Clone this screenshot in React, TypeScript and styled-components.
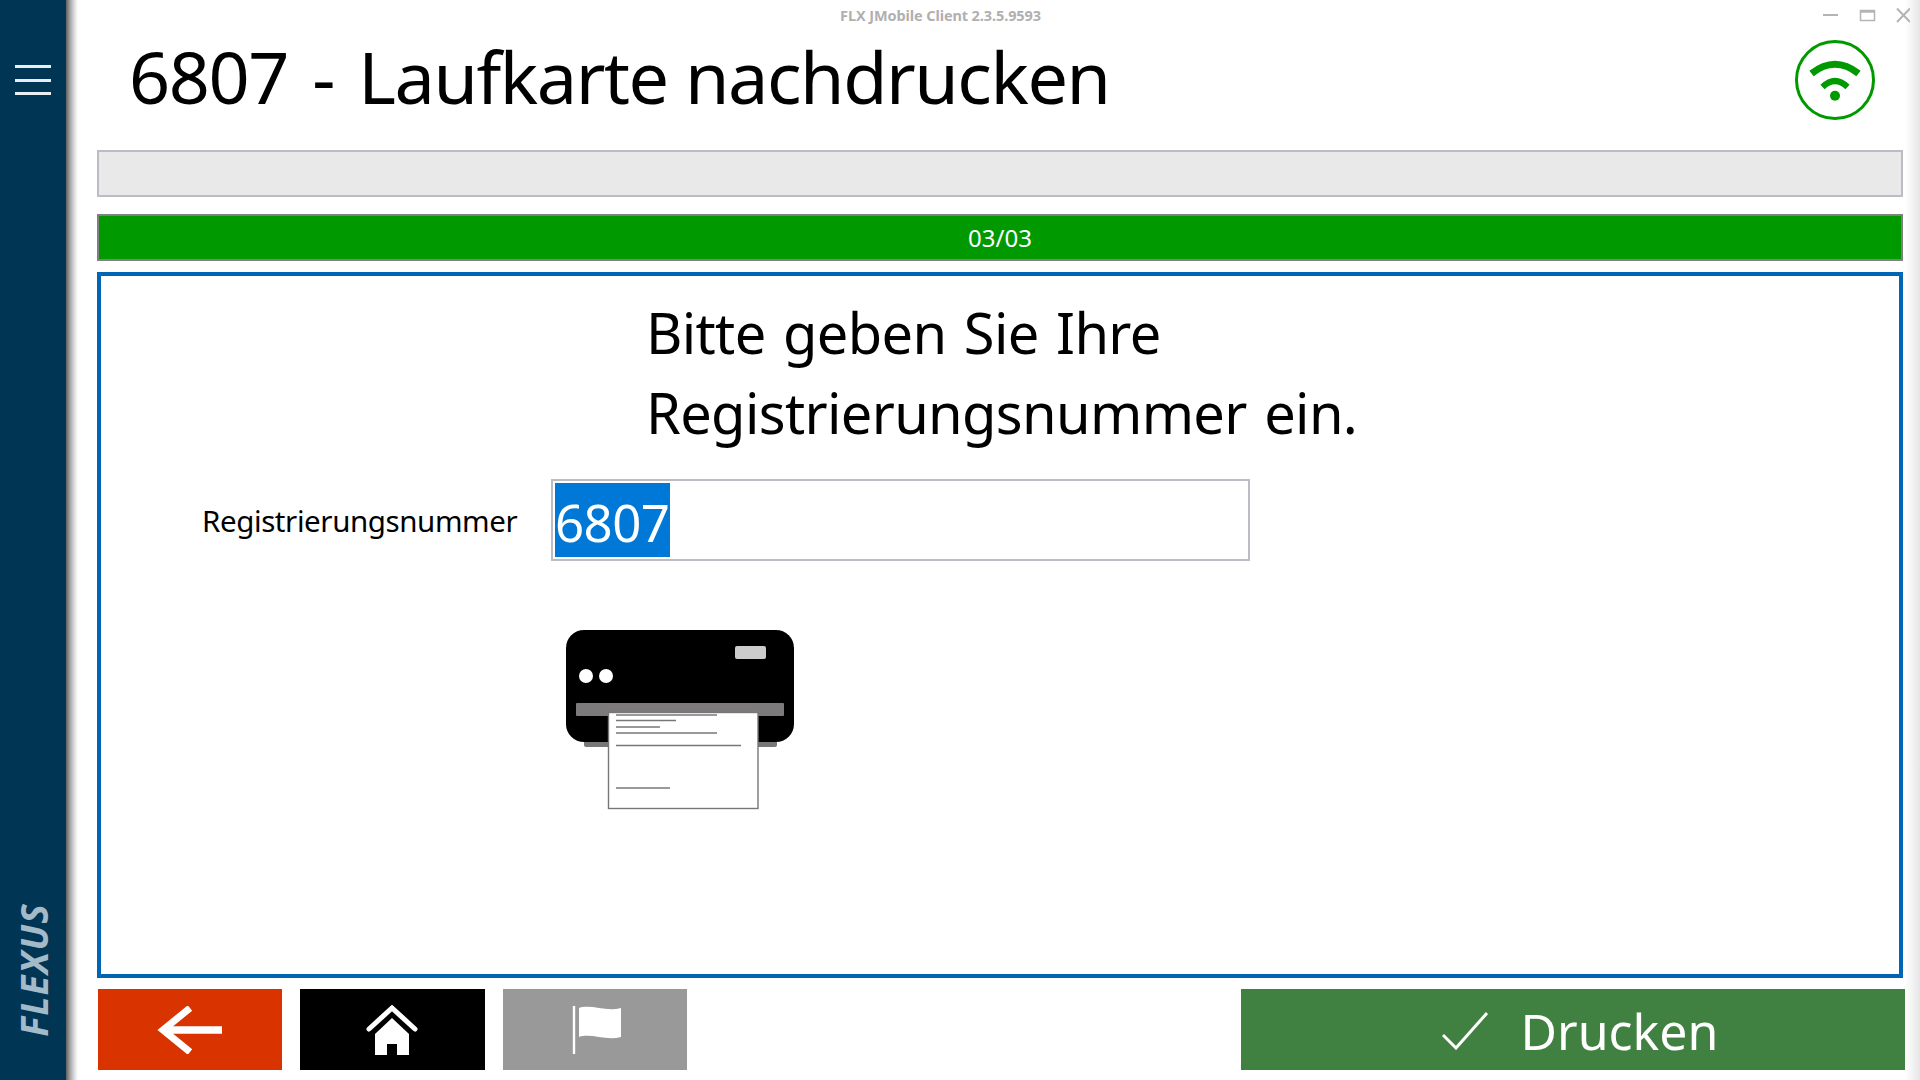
import React from "react";
import styled, { createGlobalStyle } from "styled-components";

const Global = createGlobalStyle`
  html, body { margin: 0; padding: 0; background: #fff; }
  body { font-family: "Noto Sans", "Open Sans", sans-serif; overflow: hidden; }
  * { box-sizing: border-box; }
`;
const Page = styled.div`
  width: 1920px; height: 1080px; display: flex; background: #fff; overflow: hidden;
`;
const Sidebar = styled.aside`
  width: 66px; flex: none; background: #003554; display: flex; flex-direction: column;
  align-items: center; justify-content: space-between; padding: 65px 0 43px;
`;
const SideShadow = styled.div`
  width: 12px; flex: none; background: linear-gradient(90deg, #5f5f5f 0%, #a8a8a8 35%, #e4e4e4 75%, #fff 100%);
`;
const Burger = styled.div`
  width: 36px; display: flex; flex-direction: column; gap: 10.5px;
  span { display: block; height: 3px; background: #e8eef2; }
`;
const Logo = styled.div`
  writing-mode: vertical-rl; transform: rotate(180deg); font: italic 700 37px/1 "Open Sans", sans-serif;
  color: #a3bac9; letter-spacing: 1.2px;
`;
const Main = styled.main`
  flex: 1; min-width: 0; display: flex; flex-direction: column; padding: 0 1px 10px 19px;
`;
const TitleBar = styled.div`
  height: 30px; flex: none; display: flex; align-items: center; position: relative;
`;
const WindowTitle = styled.div`
  width: 1687px; text-align: center; font: 700 14.5px "Noto Sans", sans-serif; color: #b0b0b0; letter-spacing: -0.1px;
`;
const WindowButtons = styled.svg`
  position: absolute; right: -6px; top: 0;
`;
const Header = styled.header`
  height: 120px; flex: none; display: flex; align-items: flex-start; justify-content: space-between;
  padding: 0 29px 0 32px;
`;
const Title = styled.h1`
  margin: 1px 0 0; font-family: "Noto Sans", sans-serif; font-weight: 400; font-size: 72px; line-height: 90px;
  color: #000; letter-spacing: -1.45px; white-space: nowrap;
`;
const TitleDash = styled.span`
  margin: 0 7px;
`;
const NetworkIcon = styled.svg`
  margin-top: 10px; flex: none;
`;
const StatusBar = styled.div`
  width: 1806px; height: 47px; flex: none; background: #e9e9e9; border: 2px solid #bcbcc4;
`;
const Progress = styled.div`
  width: 1806px; height: 47px; flex: none; margin-top: 17px; background: #009900; border: 2px solid #808080;
  color: #fff; font-size: 24px; display: flex; align-items: center; justify-content: center;
`;
const Panel = styled.section`
  width: 1806px; height: 706px; flex: none; margin-top: 11px; border: 4px solid #0066b3; padding: 16px 0 0 545px;
  display: flex; flex-direction: column;
`;
const Prompt = styled.div`
  font-size: 56px; line-height: 80px; color: #000; letter-spacing: -0.65px; word-spacing: 3.5px;
`;
const FormRow = styled.div`
  display: flex; align-items: center; margin: 27px 0 0 -444px; height: 82px;
`;
const Label = styled.label`
  width: 349px; font-size: 29.5px; color: #000; letter-spacing: -0.4px; white-space: nowrap;
`;
const InputBox = styled.div`
  width: 699px; height: 82px; border: 2px solid #bcbcc4; padding: 2px; background: #fff; display: flex;
`;
const Selected = styled.span`
  background: #0078d7; color: #fff; font-size: 51px; line-height: 74px; height: 74px; width: 115px;
  letter-spacing: -0.6px; white-space: nowrap; padding: 2px 0 0 0;
`;
const PrinterArt = styled.svg`
  display: block; margin: 68px 0 0 -82px;
`;
const Footer = styled.footer`
  display: flex; gap: 18px; margin-top: 11px; padding-left: 0.5px; width: 1808px; height: 81px; flex: none;
`;
const NavButton = styled.button<{ $bg: string }>`
  width: 184.5px; height: 81px; border: 0; padding: 0; background: ${p => p.$bg};
  display: flex; align-items: center; justify-content: center;
`;
const ConfirmButton = styled.button`
  margin-left: auto; width: 664px; height: 81px; border: 0; background: #408040; color: #fff;
  display: flex; align-items: center; justify-content: center; gap: 33px;
  font-family: "Noto Sans", sans-serif; font-size: 50px; padding: 2px 0 0 14px;
`;
const RightShadow = styled.div`
  width: 15px; flex: none; background: linear-gradient(90deg, #fff 0%, #f4f4f4 45%, #e6e6e6 100%);
`;

function Printer() {
  return (
    <PrinterArt width="232" height="182" viewBox="564 629 232 182">
      <rect x="584" y="730" width="193" height="17" rx="2" fill="#777" />
      <rect x="566" y="630" width="228" height="112" rx="18" fill="#000" />
      <rect x="576" y="703" width="208" height="13" rx="1" fill="#7c7a7a" />
      <rect x="735" y="646" width="31" height="13" rx="2" fill="#ccc" />
      <circle cx="586" cy="676" r="7" fill="#fff" />
      <circle cx="606" cy="676" r="7" fill="#fff" />
      <rect x="608.5" y="712.5" width="149.5" height="96" fill="#fff" stroke="#777" strokeWidth="1.4" />
      <g stroke="#777" strokeWidth="1.3">
        <line x1="616" x2="717" y1="715" y2="715" />
        <line x1="616" x2="676" y1="720.5" y2="720.5" />
        <line x1="616" x2="660" y1="727" y2="727" />
        <line x1="616" x2="717" y1="733" y2="733" />
        <line x1="616" x2="741" y1="745.5" y2="745.5" />
        <line x1="616" x2="670" y1="788" y2="788" />
      </g>
    </PrinterArt>
  );
}

export default function App() {
  return (
    <Page>
      <Global />
      <Sidebar>
        <Burger><span /><span /><span /></Burger>
        <Logo>FLEXUS</Logo>
      </Sidebar>
      <SideShadow />
      <Main>
        <TitleBar>
          <WindowTitle>FLX JMobile Client 2.3.5.9593</WindowTitle>
          <WindowButtons width="105" height="30" viewBox="1805 0 105 30">
            <g stroke="#b4b4b4" fill="none">
              <line x1="1823" x2="1838" y1="15" y2="15" strokeWidth="2" />
              <rect x="1860.5" y="10.5" width="14" height="10" strokeWidth="1.5" />
              <line x1="1860" x2="1875" y1="11.5" y2="11.5" strokeWidth="2.5" />
              <path d="M1897 8.5L1910 22M1910 8.5L1897 22" strokeWidth="2" />
            </g>
          </WindowButtons>
        </TitleBar>
        <Header>
          <Title>6807 <TitleDash>-</TitleDash> Laufkarte nachdrucken</Title>
          <NetworkIcon width="80" height="80" viewBox="1795 40 80 80">
            <circle cx="1835" cy="80" r="38.5" fill="none" stroke="#009900" strokeWidth="3" />
            <path d="M1811.5 73.5Q1835 55 1858.5 73.5" fill="none" stroke="#009900" strokeWidth="7" />
            <path d="M1822.5 87Q1835 75 1847.5 87" fill="none" stroke="#009900" strokeWidth="6" />
            <circle cx="1835" cy="95.7" r="5" fill="#009900" />
          </NetworkIcon>
        </Header>
        <StatusBar />
        <Progress>03/03</Progress>
        <Panel>
          <Prompt>Bitte geben Sie Ihre<br />Registrierungsnummer ein.</Prompt>
          <FormRow>
            <Label>Registrierungsnummer</Label>
            <InputBox><Selected>6807</Selected></InputBox>
          </FormRow>
          <Printer />
        </Panel>
        <Footer>
          <NavButton $bg="#d93300" aria-label="Zurück">
            <svg width="66" height="48" viewBox="0 0 66 48">
              <path d="M33 2L6 24L33 46" fill="none" stroke="#fff" strokeWidth="7" />
              <path d="M6 24H65" stroke="#fff" strokeWidth="7.5" />
            </svg>
          </NavButton>
          <NavButton $bg="#000" aria-label="Start">
            <svg width="52" height="50" viewBox="0 0 52 50">
              <path d="M3 24L26 3L49 24" fill="none" stroke="#fff" strokeWidth="5" strokeLinecap="round" />
              <path d="M26 13L43 29V50H31V39H21V50H9V29Z" fill="#fff" />
            </svg>
          </NavButton>
          <NavButton $bg="#999" aria-label="Markieren">
            <svg width="52" height="50" viewBox="0 0 52 50">
              <path d="M5 1V49" stroke="#fff" strokeWidth="2.4" />
              <path d="M10 3C22 -1 37 7 52 3V32C37 36 22 28 10 32Z" fill="#fff" />
            </svg>
          </NavButton>
          <ConfirmButton>
            <svg width="46" height="38" viewBox="0 0 46 38">
              <path d="M1 23L14 36L45 1" fill="none" stroke="#fff" strokeWidth="3" />
            </svg>
            Drucken
          </ConfirmButton>
        </Footer>
      </Main>
      <RightShadow />
    </Page>
  );
}
